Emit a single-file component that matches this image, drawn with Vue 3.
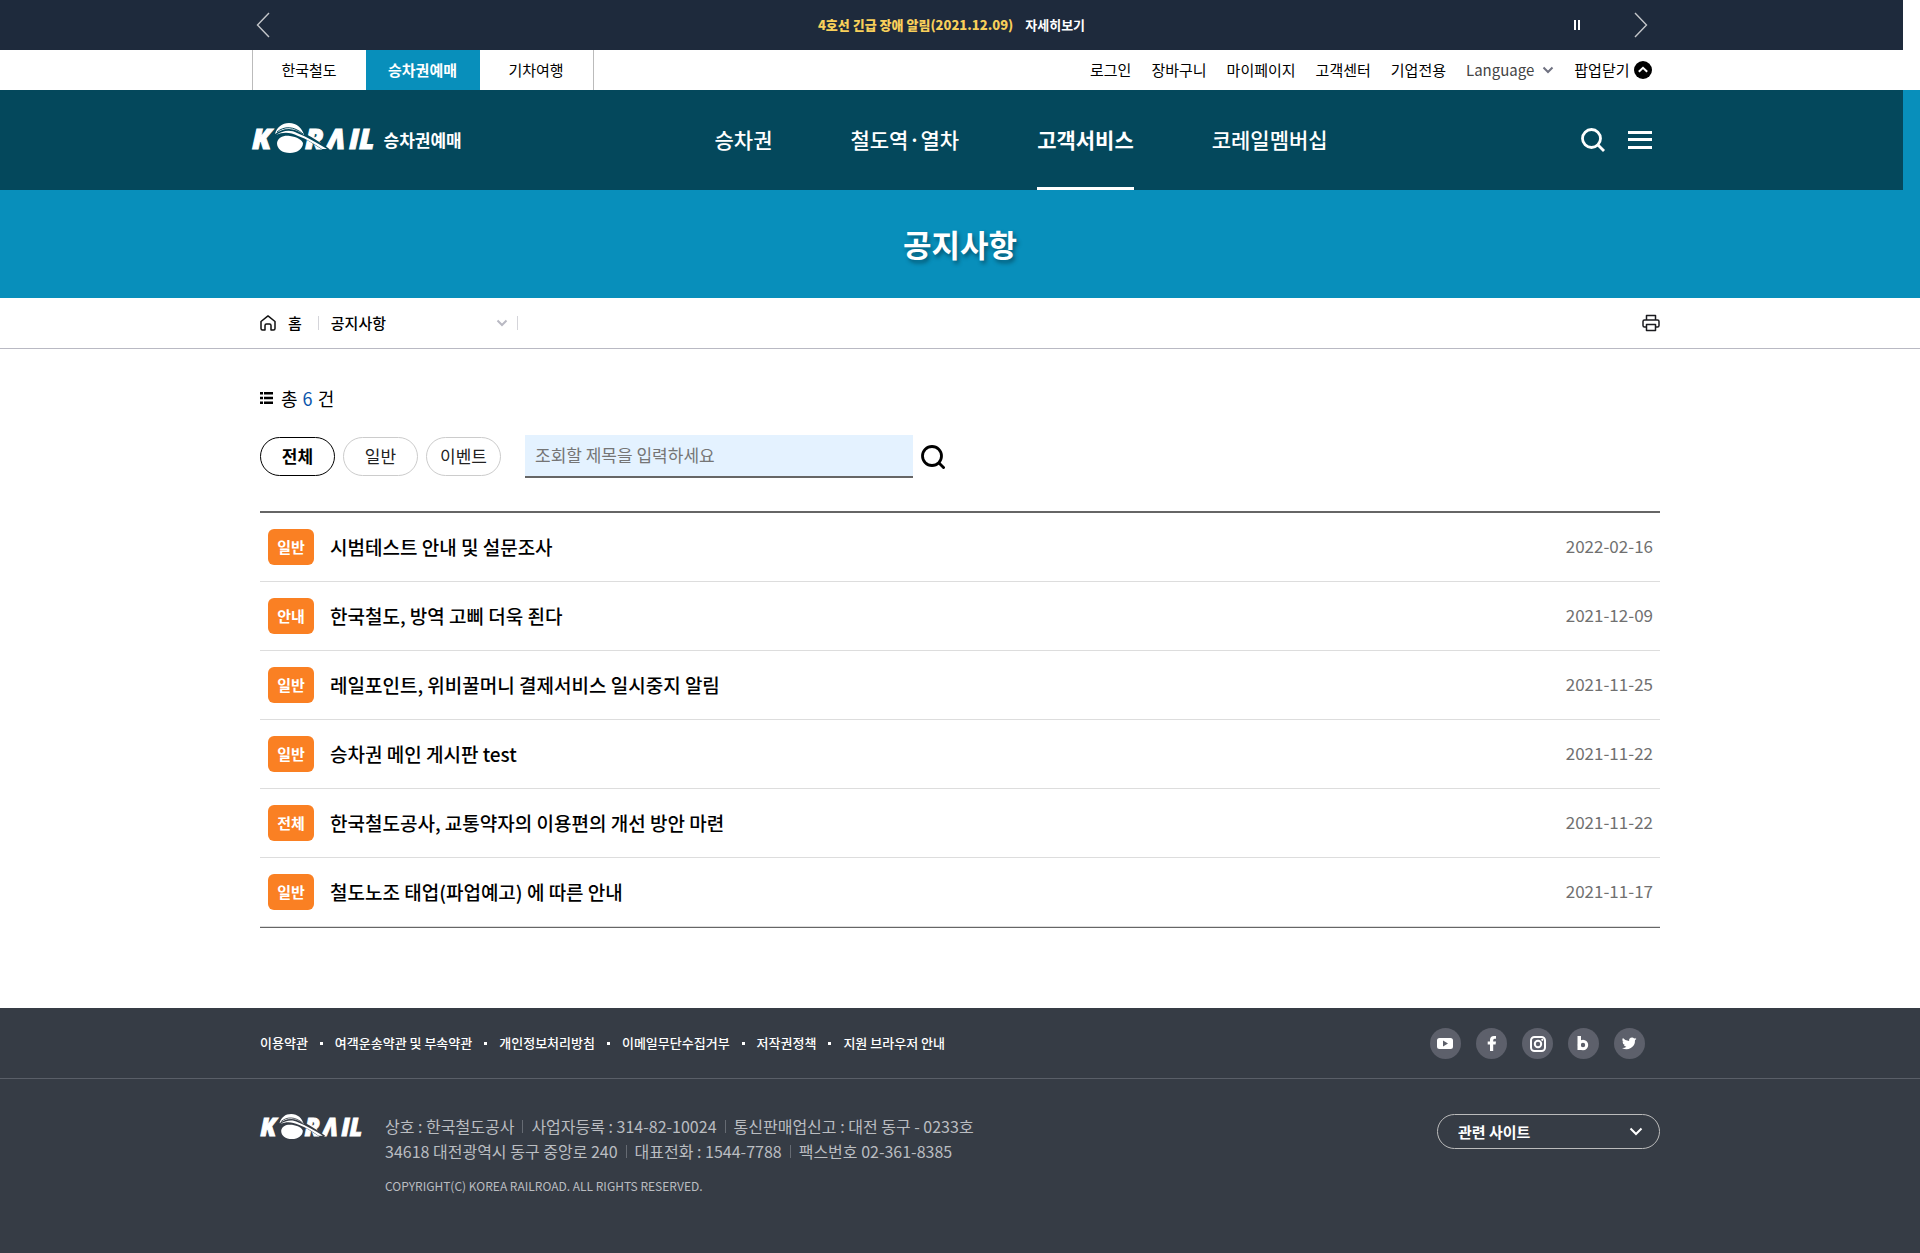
<script setup>
import { ref } from 'vue'

const siteTabs = ['한국철도', '승차권예매', '기차여행']
const utilLinks = ['로그인', '장바구니', '마이페이지', '고객센터', '기업전용']
const menu = ['승차권', '철도역·열차', '고객서비스', '코레일멤버십']
const filters = ['전체', '일반', '이벤트']
const activeFilter = ref('전체')
const keyword = ref('')
const notices = [
  { type: '일반', title: '시범테스트 안내 및 설문조사', date: '2022-02-16' },
  { type: '안내', title: '한국철도, 방역 고삐 더욱 죈다', date: '2021-12-09' },
  { type: '일반', title: '레일포인트, 위비꿀머니 결제서비스 일시중지 알림', date: '2021-11-25' },
  { type: '일반', title: '승차권 메인 게시판 test', date: '2021-11-22' },
  { type: '전체', title: '한국철도공사, 교통약자의 이용편의 개선 방안 마련', date: '2021-11-22' },
  { type: '일반', title: '철도노조 태업(파업예고) 에 따른 안내', date: '2021-11-17' },
]
const policies = ['이용약관', '여객운송약관 및 부속약관', '개인정보처리방침', '이메일무단수집거부', '저작권정책', '지원 브라우저 안내']
const company = [
  ['상호 : 한국철도공사', '사업자등록 : 314-82-10024', '통신판매업신고 : 대전 동구 - 0233호'],
  ['34618 대전광역시 동구 중앙로 240', '대표전화 : 1544-7788', '팩스번호 02-361-8385'],
]
</script>

<template>
  <div class="page">
    <div class="banner">
      <div class="inner banner-inner">
        <button type="button" class="icon-btn" aria-label="이전">
          <svg width="14" height="26" viewBox="0 0 14 26"><path d="M13 1 1.500 13 13 25" fill="none" stroke="#c4c6ca" stroke-width="1.400" /></svg>
        </button>
        <p class="alert">
          <strong>4호선 긴급 장애 알림(2021.12.09)</strong>
          <a href="#">자세히보기</a>
        </p>
        <div class="banner-ctrl">
          <button type="button" class="icon-btn" aria-label="정지">
            <svg width="6" height="10" viewBox="0 0 6 10"><path d="M0 0h2v10H0zM4 0h2v10H4z" fill="#fff" /></svg>
          </button>
          <button type="button" class="icon-btn" aria-label="다음">
            <svg width="14" height="26" viewBox="0 0 14 26"><path d="M1 1 12.500 13 1 25" fill="none" stroke="#c4c6ca" stroke-width="1.400" /></svg>
          </button>
        </div>
      </div>
    </div>

    <div class="util">
      <div class="inner util-inner">
        <nav class="tabs">
          <a v-for="(t, i) in siteTabs" :key="t" href="#" :class="{ on: i === 1 }">{{ t }}</a>
        </nav>
        <nav class="util-links">
          <a v-for="u in utilLinks" :key="u" href="#">{{ u }}</a>
          <button type="button" class="lang">
            Language
            <svg width="12" height="8" viewBox="0 0 12 8"><path d="M1.500 1.500 6 6l4.500-4.500" fill="none" stroke="#6f7180" stroke-width="2" /></svg>
          </button>
          <button type="button" class="popup">
            팝업닫기
            <svg width="18" height="18" viewBox="0 0 18 18"><circle cx="9" cy="9" r="9" /><path d="M4.800 10.800 9 6.800l4.200 4" fill="none" stroke="#fff" stroke-width="2" /></svg>
          </button>
        </nav>
      </div>
    </div>

    <div class="hero">
      <header class="gnb">
        <div class="inner gnb-inner">
          <a href="#" class="brand">
            <svg class="logo" viewBox="0 0 124 30" width="124" height="30">
              <text x="0" y="26" class="logo-text">K</text>
              <text x="53 75 97 107" y="26" class="logo-text">RΛIL</text>
              <path class="cut" d="M24 10Q42 6 58 16T76 28" />
              <path class="fill" d="M23 11C25 4 30 0 37 0 45 0 50 5 52 12 47 8 42 6 37 6 31 6 27 8 23 11Z" />
              <path class="fill" d="M24 12C30 8 38 6 45 10 55 14 65 20 75 26L70 26C62 21 55 16 46 13 38 9 31 9 24 12Z" />
              <path class="fill" d="M25 20C26 14 32 12 38 13 45 14 50 17 51 20 51 26 45 30 38 30 30 30 25 26 25 20Z" />
              <path class="line" d="M25 9C32 3 42 3 51 11" />
            </svg>
            <span>승차권예매</span>
          </a>
          <nav class="menu">
            <a v-for="(m, i) in menu" :key="m" href="#" :class="{ on: i === 2 }">{{ m }}</a>
          </nav>
          <div class="tools">
            <button type="button" class="icon-btn" aria-label="검색">
              <svg width="24" height="24" viewBox="0 0 24 24" fill="none" stroke="#fff" stroke-width="2.800"><circle cx="10.500" cy="10.500" r="9" /><path d="m17 17 6 6" /></svg>
            </button>
            <button type="button" class="icon-btn" aria-label="전체메뉴">
              <svg width="24" height="18" viewBox="0 0 24 18" fill="#fff"><path d="M0 0h24v3H0zM0 7h24v3H0zM0 15h24v3H0z" /></svg>
            </button>
          </div>
        </div>
      </header>
      <h1>공지사항</h1>
    </div>

    <div class="crumb">
      <div class="wrap crumb-inner">
        <a href="#" class="home">
          <svg width="16" height="16" viewBox="0 0 16 16" fill="none" stroke="#111" stroke-width="1.500" stroke-linejoin="round"><path d="M1 6.500 8 .9l7 5.600V13.500q0 1.500-1.500 1.500H11V10.500q0-1.500-1.500-1.500h-3Q5 9 5 10.500V15H2.500Q1 15 1 13.500z" /></svg>
          홈
        </a>
        <div class="depth">
          <select aria-label="현재 메뉴"><option>공지사항</option></select>
          <svg width="12" height="8" viewBox="0 0 12 8"><path d="M1.500 1.500 6 6l4.500-4.500" fill="none" stroke="#b9b9c3" stroke-width="2" /></svg>
        </div>
        <button type="button" class="icon-btn print" aria-label="인쇄">
          <svg width="18" height="18" viewBox="0 0 18 18" fill="none" stroke="#1b1b1f" stroke-width="1.500" stroke-linejoin="round"><path d="M4.500 5.500V1.500h9v4M4 13H2.500Q1 13 1 11.500V7.500Q1 6 2.500 6h13Q17 6 17 7.500v4q0 1.500-1.500 1.500H14M4.500 10.500h9V16.500h-9z" /></svg>
        </button>
      </div>
    </div>

    <main class="wrap">
      <p class="total">
        <svg width="13" height="12" viewBox="0 0 13 12"><path d="M0 0h3v2.500H0zM4 0h9v2.500H4zM0 4.700h3v2.500H0zM4 4.700h9v2.500H4zM0 9.400h3v2.500H0zM4 9.400h9v2.500H4z" /></svg>
        <span>총 <em>{{ notices.length }}</em> 건</span>
      </p>
      <form class="search" @submit.prevent>
        <div class="filters">
          <button v-for="f in filters" :key="f" type="button" :class="{ on: f === activeFilter }" @click="activeFilter = f">{{ f }}</button>
        </div>
        <input v-model="keyword" type="text" placeholder="조회할 제목을 입력하세요" aria-label="제목 검색" />
        <button type="submit" class="icon-btn" aria-label="조회">
          <svg width="24" height="24" viewBox="0 0 24 24" fill="none" stroke="#000" stroke-width="2.800"><circle cx="11" cy="11" r="9.500" /><path d="m17.500 17.500 6 6" /></svg>
        </button>
      </form>
      <ul class="list">
        <li v-for="n in notices" :key="n.title">
          <span class="badge">{{ n.type }}</span>
          <a href="#">{{ n.title }}</a>
          <time>{{ n.date }}</time>
        </li>
      </ul>
    </main>

    <footer>
      <div class="foot-top">
        <div class="wrap foot-row">
          <ul class="policies">
            <li v-for="p in policies" :key="p"><a href="#">{{ p }}</a></li>
          </ul>
          <div class="sns">
            <a href="#" aria-label="유튜브"><svg viewBox="0 0 31 31"><path fill-rule="evenodd" d="M9.500 10h11q2.500 0 2.500 2.500v6q0 2.500-2.500 2.500h-11Q7 21 7 18.500v-6Q7 10 9.500 10zM13 12.500v6l5-3z" /></svg></a>
            <a href="#" aria-label="페이스북"><svg viewBox="0 0 31 31"><path d="M14 23v-6.500h-2.300v-3H14v-1.700Q14 8 18 8h2v2.800h-1.400q-1.400 0-1.400 1.500v1.200H20l-.4 3h-2.400V23z" /></svg></a>
            <a href="#" aria-label="인스타그램"><svg viewBox="0 0 31 31"><rect x="9" y="9" width="14" height="14" rx="3.500" fill="none" stroke="#fff" stroke-width="2" /><circle cx="16" cy="16" r="3.200" fill="none" stroke="#fff" stroke-width="2" /><circle cx="20.300" cy="11.800" r="1.100" /></svg></a>
            <a href="#" aria-label="블로그"><svg viewBox="0 0 31 31"><path d="M9.500 8H13v14H9.500z" /><circle cx="15" cy="17" r="3.700" fill="none" stroke="#fff" stroke-width="3" /></svg></a>
            <a href="#" aria-label="트위터"><svg viewBox="0 0 31 31"><path d="M22.500 10.800a6 6 0 0 1-1.700.5 3 3 0 0 0 1.300-1.600 6 6 0 0 1-1.900.7 3 3 0 0 0-5.100 2.700A8.500 8.500 0 0 1 8.900 10a3 3 0 0 0 .9 4 3 3 0 0 1-1.300-.4 3 3 0 0 0 2.400 3 3 3 0 0 1-1.300 0 3 3 0 0 0 2.800 2.100A6 6 0 0 1 8 19.900a8.500 8.500 0 0 0 13-7.600 6 6 0 0 0 1.500-1.500z" /></svg></a>
          </div>
        </div>
      </div>
      <div class="wrap foot-main">
        <svg class="logo foot-logo" viewBox="0 0 124 30" width="104" height="25">
          <text x="0" y="26" class="logo-text">K</text>
          <text x="53 75 97 107" y="26" class="logo-text">RΛIL</text>
          <path class="cut" d="M24 10Q42 6 58 16T76 28" />
          <path class="fill" d="M23 11C25 4 30 0 37 0 45 0 50 5 52 12 47 8 42 6 37 6 31 6 27 8 23 11Z" />
          <path class="fill" d="M24 12C30 8 38 6 45 10 55 14 65 20 75 26L70 26C62 21 55 16 46 13 38 9 31 9 24 12Z" />
          <path class="fill" d="M25 20C26 14 32 12 38 13 45 14 50 17 51 20 51 26 45 30 38 30 30 30 25 26 25 20Z" />
          <path class="line" d="M25 9C32 3 42 3 51 11" />
        </svg>
        <div class="company">
          <address>
            <p v-for="(row, i) in company" :key="i"><span v-for="c in row" :key="c">{{ c }}</span></p>
          </address>
          <p class="copy">COPYRIGHT(C) KOREA RAILROAD. ALL RIGHTS RESERVED.</p>
        </div>
        <div class="related">
          <select aria-label="관련 사이트"><option>관련 사이트</option></select>
          <svg width="14" height="9" viewBox="0 0 14 9"><path d="m1.500 1.500 5.500 5.500 5.500-5.500" fill="none" stroke="#fff" stroke-width="2" /></svg>
        </div>
      </div>
    </footer>
  </div>
</template>

<style>
html {
  background: #fff;
}
body {
  margin: 0;
}
</style>

<style scoped>
.page {
  --gutter: 17px;
  --blue: #088fbb;
  --navy: #04485c;
  color: #000;
  font-family: "Noto Sans CJK KR", "Noto Sans", sans-serif;
  font-size: 15px;
  line-height: 24px;
}
* {
  box-sizing: border-box;
}
a {
  color: inherit;
  text-decoration: none;
}
p,
ul,
h1 {
  margin: 0;
  padding: 0;
  list-style: none;
}
button,
input,
select {
  margin: 0;
  padding: 0;
  border: 0;
  border-radius: 0;
  background: none;
  color: inherit;
  font: inherit;
}
svg {
  display: block;
  flex: none;
}
.icon-btn {
  display: flex;
}
.inner,
.wrap {
  max-width: 1400px;
  margin: 0 auto;
}

.banner {
  margin-right: var(--gutter);
  background: #1e2a3c;
}
.banner-inner {
  display: grid;
  grid-template-columns: 1fr auto 1fr;
  align-items: center;
  height: 50px;
  padding: 0 4px;
}
.alert {
  display: flex;
  gap: 12px;
  color: #fff;
  font-size: 13px;
  font-weight: 700;
  line-height: 26px;
}
.alert strong {
  color: #f8cf5a;
}
.banner-ctrl {
  display: flex;
  justify-content: flex-end;
  align-items: center;
  gap: 54px;
}

.util {
  margin-right: var(--gutter);
}
.util-inner {
  display: flex;
  justify-content: space-between;
  height: 40px;
}
.tabs {
  display: flex;
  border: solid #bbb;
  border-width: 0 1px;
}
.tabs a {
  width: 113px;
  line-height: 40px;
  text-align: center;
}
.tabs .on {
  width: 114px;
  background: var(--blue);
  color: #fff;
  font-weight: 700;
}
.util-links {
  display: flex;
  align-items: center;
  gap: 20px;
}
.lang,
.popup {
  display: flex;
  align-items: center;
}
.lang {
  gap: 8px;
  color: #444;
}
.popup {
  gap: 4px;
}

.hero {
  background: var(--blue);
  color: #fff;
}
.gnb {
  margin-right: var(--gutter);
  background: var(--navy);
}
.gnb-inner {
  display: flex;
  align-items: center;
  height: 100px;
}
.brand {
  display: flex;
  flex: none;
  align-items: center;
  gap: 8px;
  width: 463px;
  font-size: 17px;
  font-weight: 700;
}
.logo {
  overflow: visible;
}
.brand .logo {
  margin-bottom: 4px;
}
.logo-text {
  fill: #fff;
  stroke: #fff;
  stroke-width: 1px;
  font: italic 800 29px "Open Sans", "Noto Sans", sans-serif;
}
.logo .fill {
  fill: #fff;
}
.logo .cut,
.logo .line {
  fill: none;
  stroke: var(--navy);
}
.logo .cut {
  stroke-width: 5;
}
.foot-logo .cut,
.foot-logo .line {
  stroke: #363c45;
}
.menu {
  display: flex;
  gap: 78px;
  font-size: 21px;
  font-weight: 500;
}
.menu a {
  border-bottom: 3px solid transparent;
  border-top: 1px solid transparent;
  line-height: 96px;
}
.menu .on {
  border-bottom-color: #fff;
  font-weight: 700;
}
.tools {
  display: flex;
  align-items: center;
  gap: 23px;
  margin-left: auto;
}
h1 {
  font-size: 31px;
  font-weight: 700;
  line-height: 108px;
  text-align: center;
  text-shadow: 2px 3px 4px rgba(0, 0, 0, 0.4);
}

.crumb {
  border-bottom: 1px solid #b9b9c3;
}
.crumb-inner {
  display: flex;
  align-items: center;
  height: 50px;
  font-weight: 500;
}
.home {
  display: flex;
  align-items: center;
  gap: 12px;
  padding-right: 16px;
}
.depth {
  display: grid;
  grid-template: 14px / 1fr auto;
  align-items: center;
  width: 200px;
  padding: 0 9px 0 12px;
  border: solid #d5d5da;
  border-width: 0 1px;
}
.depth select,
.related select {
  appearance: none;
  cursor: pointer;
}
.depth select {
  grid-area: 1 / 1 / 2 / 3;
}
.depth svg {
  grid-area: 1 / 2;
  pointer-events: none;
}
.print {
  margin-left: auto;
}

.total {
  display: flex;
  align-items: center;
  gap: 8px;
  padding-top: 37px;
  font-size: 18px;
}
.total em {
  margin: 0 1px;
  color: #0b55ab;
  font-style: normal;
}
.search {
  display: flex;
  align-items: center;
  gap: 8px;
  margin-top: 25px;
  font-size: 17px;
}
.filters {
  display: flex;
  gap: 8px;
  margin-right: 16px;
}
.filters button {
  width: 75px;
  height: 39px;
  padding-bottom: 2px;
  border: 1px solid #ccc;
  border-radius: 20px;
  color: #222;
}
.filters .on {
  border-color: #000;
  color: #000;
  font-weight: 700;
}
.search input {
  width: 388px;
  height: 43px;
  padding: 0 10px 2px;
  border-bottom: 2px solid #666;
  background: #e4f2ff;
}
.search input::placeholder {
  color: #757575;
}
.list {
  margin-top: 33px;
  border-top: 2px solid #666;
  border-bottom: 1px solid #666;
}
.list li {
  display: flex;
  align-items: center;
  height: 69px;
  padding: 0 7px 0 8px;
  border-bottom: 1px solid #ddd;
}
.badge {
  width: 46px;
  margin-right: 16px;
  border-radius: 6px;
  background: #fa8023;
  color: #fff;
  font-weight: 700;
  line-height: 36px;
  text-align: center;
}
.list a {
  font-size: 19px;
  font-weight: 500;
}
.list time {
  margin-left: auto;
  padding-bottom: 2px;
  color: #707070;
  font-size: 17px;
}

footer {
  min-height: 245px;
  margin-top: 80px;
  background: #363c45;
  color: #fff;
}
.foot-top {
  border-bottom: 1px solid #5a5f68;
}
.foot-row {
  display: flex;
  justify-content: space-between;
  align-items: center;
  height: 70px;
  padding-right: 15px;
}
.policies {
  display: flex;
  font-size: 13px;
  font-weight: 500;
}
.policies li {
  display: flex;
  align-items: center;
}
.policies li + li::before {
  width: 3px;
  height: 3px;
  margin: 0 12px;
  background: #fff;
  content: "";
}
.sns {
  display: flex;
  gap: 15px;
}
.sns a {
  width: 31px;
  height: 31px;
  border-radius: 50%;
  background: #5d606b;
}
.sns svg {
  fill: #fff;
}
.foot-main {
  display: flex;
  align-items: flex-start;
  padding-top: 35px;
}
.company {
  margin-left: 21px;
  color: #babdc1;
  font-size: 16px;
  line-height: 25px;
}
address {
  font-style: normal;
}
address p {
  display: flex;
  align-items: center;
}
address span {
  display: flex;
  align-items: center;
}
address span + span::before {
  width: 1px;
  height: 13px;
  margin: 0 8px;
  background: #666b73;
  content: "";
}
.copy {
  margin-top: 9px;
  font-size: 12px;
}
.related {
  display: grid;
  grid-template-columns: 1fr auto;
  align-items: center;
  width: 223px;
  height: 35px;
  margin-left: auto;
  padding-right: 16px;
  border: 1px solid #bbb;
  border-radius: 18px;
  font-weight: 700;
}
.related select {
  grid-area: 1 / 1 / 2 / 3;
  height: 33px;
  padding-left: 20px;
}
.related option {
  color: #000;
}
.related svg {
  grid-area: 1 / 2;
  pointer-events: none;
}
</style>
